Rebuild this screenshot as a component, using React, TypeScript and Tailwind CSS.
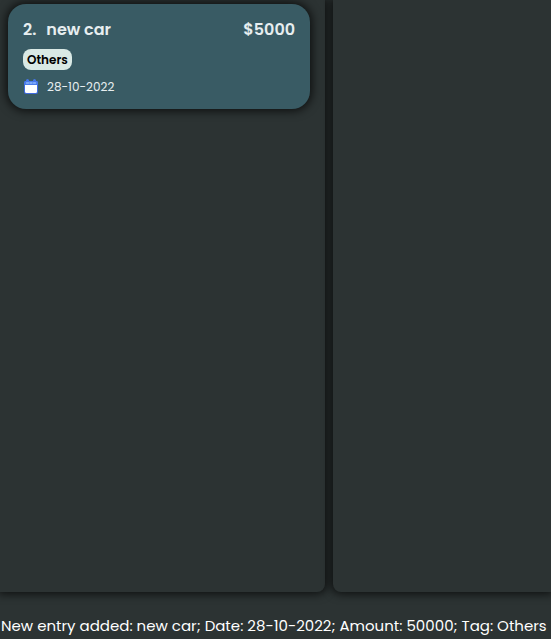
import type { ReactNode } from "react";

function CalendarIcon() {
  return (
    <svg viewBox="0 0 16 16" className="size-4 shrink-0" aria-hidden="true">
      <rect x="1" y="2" width="14" height="13" rx="2" fill="#3f6ae0" />
      <rect x="1" y="2" width="14" height="4" rx="1.5" fill="#4a7bea" />
      <path d="M2 6h12v6.5a1.5 1.5 0 0 1-1.5 1.5h-9A1.5 1.5 0 0 1 2 12.5z" fill="#ffffff" />
      <path d="M4.5 1.5v2M11.5 1.5v2" stroke="#4676ea" strokeWidth="3" strokeLinecap="round" />
      <path d="M3.5 4h2M7 4h2M10.5 4h2" stroke="#8db8fb" strokeWidth="1.4" strokeLinecap="round" />
    </svg>
  );
}

type Entry = { id: number; title: string; amount: string; tag: string; date: string };

const entries: Entry[] = [
  { id: 2, title: "new car", amount: "$5000", tag: "Others", date: "28-10-2022" },
];

function EntryCard({ entry }: { entry: Entry }) {
  return (
    <li className="rounded-[18px] bg-[#395b64] px-[15px] pt-[14px] pb-[13px] text-[#e7eef0] shadow-[0_0_10px_2px_rgba(0,0,0,0.7)]">
      <div className="flex items-center justify-between text-[16px] leading-6 font-semibold">
        <h2 className="flex gap-[10px]">
          <span>{entry.id}.</span>
          <span>{entry.title}</span>
        </h2>
        <span>{entry.amount}</span>
      </div>
      <div className="mt-[7px] flex">
        <span className="rounded-lg bg-[#d9e9e5] px-1 text-[12px] leading-[21px] font-semibold text-black">
          {entry.tag}
        </span>
      </div>
      <div className="mt-2 flex items-center gap-2 text-[12px] leading-[18px]">
        <CalendarIcon />
        <time dateTime="2022-10-28">{entry.date}</time>
      </div>
    </li>
  );
}

function Column({ className, children }: { className: string; children?: ReactNode }) {
  return (
    <section className={`bg-[#2c3333] shadow-[0_0_10px_2px_rgba(0,0,0,0.7)] ${className}`}>
      {children}
    </section>
  );
}

export default function App() {
  return (
    <div className="flex min-h-screen flex-col overflow-hidden bg-[#2c3333] font-[Poppins,Inter,sans-serif]">
      <main className="flex flex-1 gap-2">
        <Column className="w-[59%] rounded-br-lg pt-1 pr-[15px] pl-2">
          <ul>
            {entries.map((entry) => (
              <EntryCard key={entry.id} entry={entry} />
            ))}
          </ul>
        </Column>
        <Column className="flex-1 rounded-bl-lg" />
      </main>
      <footer className="px-px pt-[22px] pb-px text-[15px] leading-6 whitespace-nowrap text-white">
        <p role="status">New entry added: new car; Date: 28-10-2022; Amount: 50000; Tag: Others</p>
      </footer>
    </div>
  );
}
